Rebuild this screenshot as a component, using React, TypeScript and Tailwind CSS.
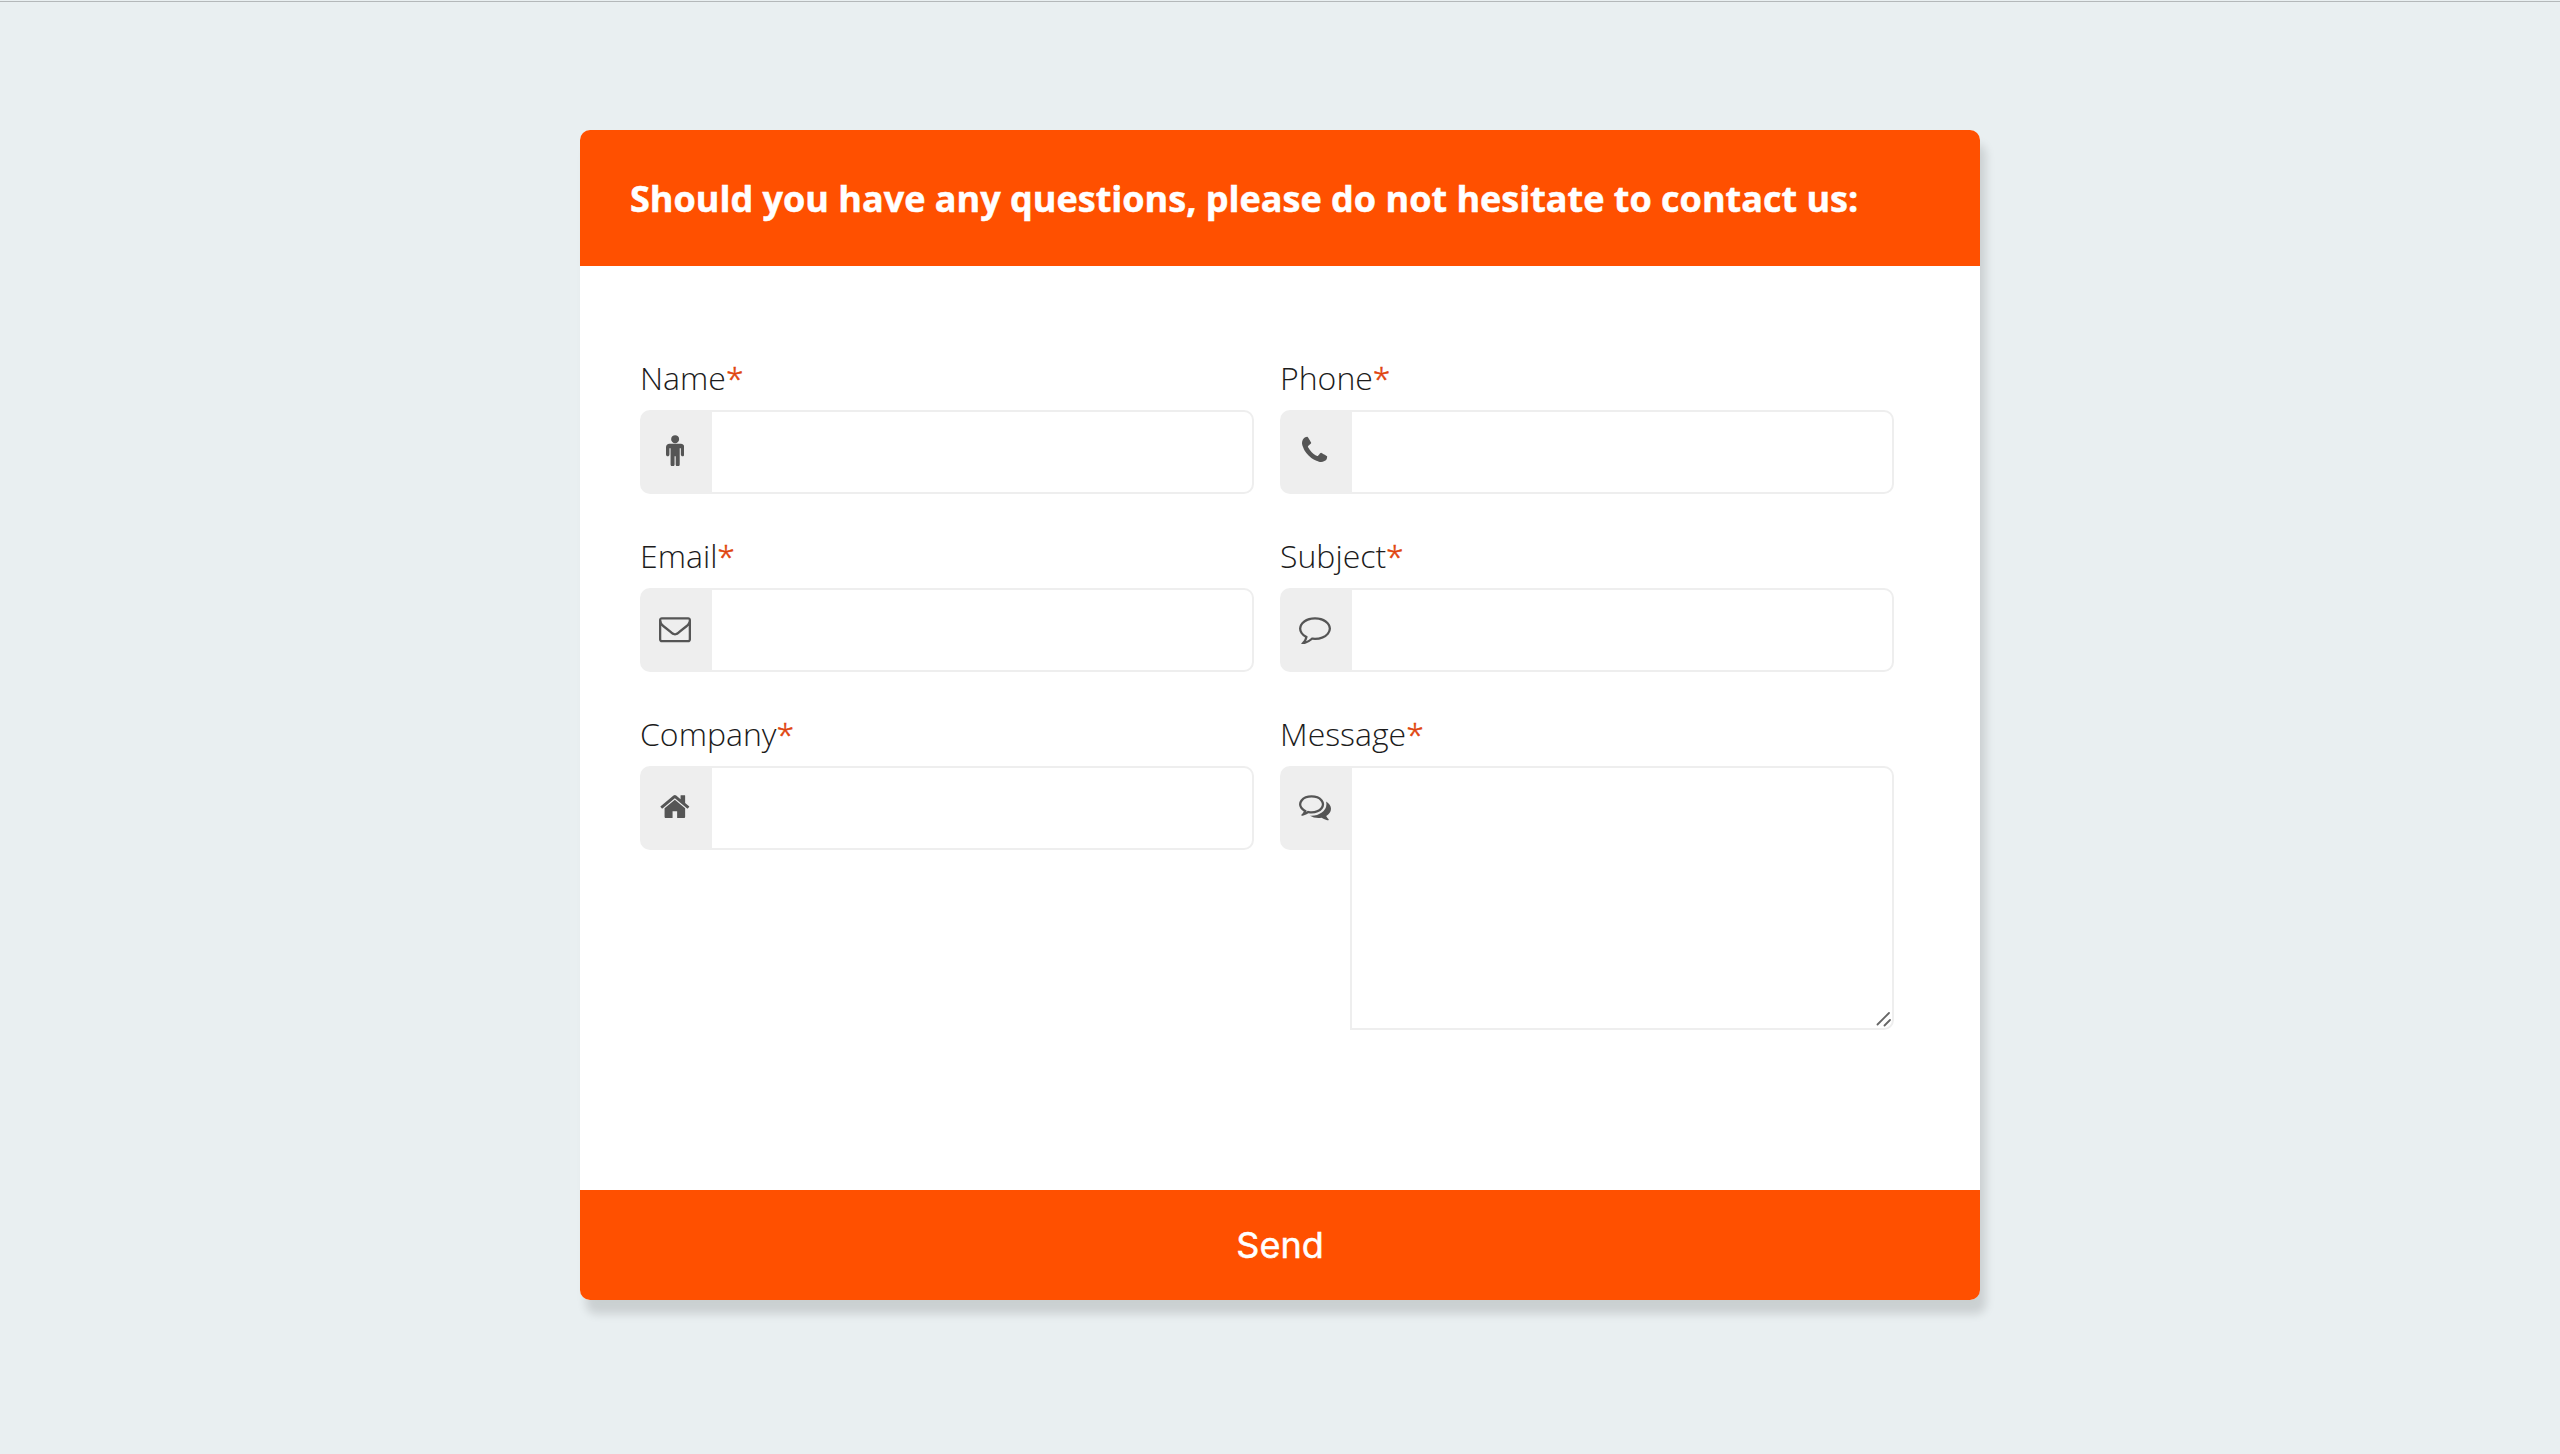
import type { ReactNode } from "react";

// Glyph outlines use font units: y points up and 56 units make one pixel.
const glyphs = {
  male: {
    width: 1024,
    d: "M1024 832v-416q0 -40 -28 -68t-68 -28t-68 28t-28 68v352h-64v-912q0 -46 -33 -79t-79 -33t-79 33t-33 79v464h-64v-464q0 -46 -33 -79t-79 -33t-79 33t-33 79v912h-64v-352q0 -40 -28 -68t-68 -28t-68 28t-28 68v416q0 80 56 136t136 56h640q80 0 136 -56t56 -136z M736 1280q0 -93 -65.5 -158.5t-158.5 -65.5t-158.5 65.5t-65.5 158.5t65.5 158.5t158.5 65.5t158.5 -65.5t65.5 -158.5z",
  },
  phone: {
    width: 1408,
    d: "M1408 296q0 -27 -10 -70.5t-21 -68.5q-21 -50 -122 -106q-94 -51 -186 -51q-27 0 -53 3.5t-57.5 12.5t-47 14.5t-55.5 20.5t-49 18q-98 35 -175 83q-127 79 -264 216t-216 264q-48 77 -83 175q-3 9 -18 49t-20.5 55.5t-14.5 47t-12.5 57.5t-3.5 53q0 92 51 186q56 101 106 122q25 11 68.5 21t70.5 10q14 0 21 -3q18 -6 53 -76q11 -19 30 -54t35 -63.5t31 -53.5q3 -4 17.5 -25t21.5 -35.5t7 -28.5q0 -20 -28.5 -50t-62 -55t-62 -53t-28.5 -46q0 -9 5 -22.5t8.5 -20.5t14 -24t11.5 -19q76 -137 174 -235t235 -174q2 -1 19 -11.5t24 -14t20.5 -8.5t22.5 -5q18 0 46 28.5t53 62t55 62t50 28.5q14 0 28.5 -7t35.5 -21.5t25 -17.5q25 -15 53.5 -31t63.5 -35t54 -30q70 -35 76 -53q3 -7 3 -21z",
  },
  envelope: {
    width: 1792,
    d: "M1664 32v768q-32 -36 -69 -66q-268 -206 -426 -338q-51 -43 -83 -67t-86.5 -48.5t-102.5 -24.5h-1h-1q-48 0 -102.5 24.5t-86.5 48.5t-83 67q-158 132 -426 338q-37 30 -69 66v-768q0 -13 9.5 -22.5t22.5 -9.5h1472q13 0 22.5 9.5t9.5 22.5zM1664 1083v11v13.5t-0.5 13t-3 12.5t-5.5 9t-9 7.5t-14 2.5h-1472q-13 0 -22.5 -9.5t-9.5 -22.5q0 -168 147 -284q193 -152 401 -317q6 -5 35 -29.5t46 -37.5t44.5 -31.5t50.5 -27.5t43 -9h1h1q20 0 43 9t50.5 27.5t44.5 31.5t46 37.5t35 29.5q208 165 401 317q54 43 100.5 115.5t46.5 131.5zM1792 1120v-1088q0 -66 -47 -113t-113 -47h-1472q-66 0 -113 47t-47 113v1088q0 66 47 113t113 47h1472q66 0 113 -47t47 -113z",
  },
  comment: {
    width: 1792,
    d: "M896 1152q-204 0 -381.5 -69.5t-282 -187.5t-104.5 -255q0 -112 71.5 -213.5t201.5 -175.5l87 -50l-27 -96q-24 -91 -70 -172q152 63 275 171l43 38l57 -6q69 -8 130 -8q204 0 381.5 69.5t282 187.5t104.5 255t-104.5 255t-282 187.5t-381.5 69.5zM1792 640q0 -174 -120 -321.5t-326 -233t-450 -85.5q-70 0 -145 8q-198 -175 -460 -242q-49 -14 -114 -22h-5q-15 0 -27 10.5t-16 27.5v1q-3 4 -0.5 12t2 10t4.5 9.5l6 9t7 8.5t8 9q7 8 31 34.5t34.5 38t31 39.5t32.5 51t27 59t26 76q-157 89 -247.5 220t-90.5 281q0 130 71 248.5t191 204.5t286 136.5t348 50.5t348 -50.5t286 -136.5t191 -204.5t71 -248.5z",
  },
  home: {
    width: 1664,
    d: "M1408 544v-480q0 -26 -19 -45t-45 -19h-384v384h-256v-384h-384q-26 0 -45 19t-19 45v480q0 1 0.5 3t0.5 3l575 474l575 -474q1 -2 1 -6zM1631 613l-62 -74q-8 -9 -21 -11h-3q-13 0 -21 7l-692 577l-692 -577q-12 -8 -24 -7q-13 2 -21 11l-62 74q-8 10 -7 23.5t11 21.5l719 599q32 26 76 26t76 -26l244 -204v195q0 14 9 23t23 9h192q14 0 23 -9t9 -23v-408l219 -182q10 -8 11 -21.5t-7 -23.5z",
  },
  comments: {
    width: 1792,
    d: "M704 1152q-153 0 -286 -52t-211.5 -141t-78.5 -191q0 -82 53 -158t149 -132l97 -56l-35 -84q34 20 62 39l44 31l53 -10q78 -14 153 -14q153 0 286 52t211.5 141t78.5 191t-78.5 191t-211.5 141t-286 52zM704 1280q191 0 353.5 -68.5t256.5 -186.5t94 -257t-94 -257t-256.5 -186.5t-353.5 -68.5q-86 0 -176 16q-124 -88 -278 -128q-36 -9 -86 -16h-3q-11 0 -20.5 8t-11.5 21q-1 3 -1 6.5t0.5 6.5t2 6l2.5 5t3.5 5.5t4 5t4.5 5t4 4.5q5 6 23 25t26 29.5t22.5 29t25 38.5t20.5 44q-124 72 -195 177t-71 224q0 139 94 257t256.5 186.5t353.5 68.5zM1526 111q10 -24 20.5 -44t25 -38.5t22.5 -29t26 -29.5t23 -25q1 -1 4 -4.5t4.5 -5t4 -5t3.5 -5.5l2.5 -5t2 -6t0.5 -6.5t-1 -6.5q-3 -14 -13 -22t-22 -7q-50 7 -86 16q-154 40 -278 128q-90 -16 -176 -16q-271 0 -472 132q58 -4 88 -4q161 0 309 45t264 129q125 92 192 212t67 254q0 77 -23 152q129 -71 204 -178t75 -230q0 -120 -71 -224.5t-195 -176.5z",
  },
};

type GlyphName = keyof typeof glyphs;

function Glyph({ name }: { name: GlyphName }) {
  const { width, d } = glyphs[name];
  return (
    <svg
      viewBox={`0 -1568 ${width} 1792`}
      width={width / 56}
      height={32}
      fill="currentColor"
      aria-hidden="true"
    >
      <path d={d} transform="scale(1 -1)" />
    </svg>
  );
}

function Field({ id, label, icon, children }: { id: string; label: string; icon: GlyphName; children?: ReactNode }) {
  return (
    <div>
      <label htmlFor={id} className="block h-[54px] text-[32px] leading-[43px] font-light text-[#1c1c1c]">
        {label}
        <span className="text-[#e0440e] [-webkit-text-stroke:0.5px_#e0440e]">*</span>
      </label>
      <div className="flex items-start">
        <span className="flex h-[84px] w-[70px] justify-center rounded-l-[10px] bg-[#eee] pt-6 text-[#555]">
          <Glyph name={icon} />
        </span>
        {children ?? (
          <input
            id={id}
            className="h-[84px] w-[544px] rounded-r-[10px] border-2 border-[#eee] bg-white px-4 text-[28px] outline-none"
          />
        )}
      </div>
    </div>
  );
}

export default function App() {
  return (
    <main className="flex h-[1454px] w-full flex-col bg-[#e9eff1] pt-px font-['Open_Sans',sans-serif]">
      <div className="mb-32 h-px shrink-0 bg-[#b4b8ba]" />
      <form className="mx-auto flex h-[1170px] w-[1400px] flex-col overflow-hidden rounded-[10px] bg-white shadow-[6px_14px_10px_rgba(0,0,0,0.13)]">
        <header className="flex h-[136px] items-center bg-[#ff5000] px-[50px] pt-0.5">
          <h1 className="text-[36px] font-bold whitespace-nowrap text-white [-webkit-text-stroke:0.5px_white]">
            Should you have any questions, please do not hesitate to contact us:
          </h1>
        </header>
        <div className="flex flex-1 gap-[26px] px-[60px] pt-[90px]">
          <div className="flex flex-col gap-10">
            <Field id="name" label="Name" icon="male" />
            <Field id="email" label="Email" icon="envelope" />
            <Field id="company" label="Company" icon="home" />
          </div>
          <div className="flex flex-col gap-10">
            <Field id="phone" label="Phone" icon="phone" />
            <Field id="subject" label="Subject" icon="comment" />
            <Field id="message" label="Message" icon="comments">
              <div className="relative h-[264px] w-[544px]">
                <textarea
                  id="message"
                  className="block size-full resize-none rounded-r-[10px] border-2 border-[#eee] bg-white p-4 text-[28px] outline-none"
                />
                <svg
                  className="pointer-events-none absolute right-[3px] bottom-[3px]"
                  width="15"
                  height="15"
                  viewBox="0 0 15 15"
                  fill="none"
                  stroke="#666"
                  strokeWidth="1.8"
                  strokeLinecap="round"
                  aria-hidden="true"
                >
                  <path d="M1.5 12.5 13 1M8.5 13.5 14 8" />
                </svg>
              </div>
            </Field>
          </div>
        </div>
        <button
          type="button"
          className="h-[110px] bg-[#ff5000] font-['Inter',sans-serif] text-[36px] text-white [-webkit-text-stroke:0.5px_white]"
        >
          Send
        </button>
      </form>
    </main>
  );
}
